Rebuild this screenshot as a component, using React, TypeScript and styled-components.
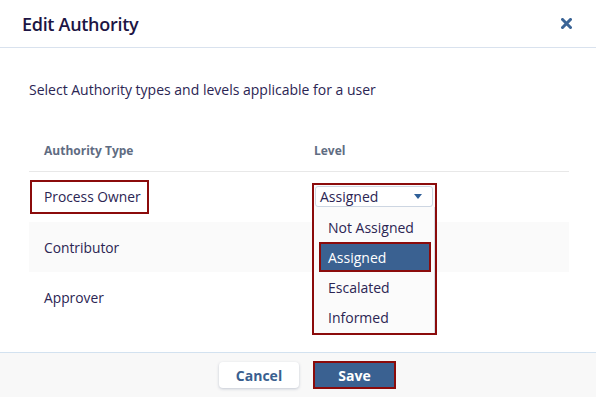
import React from 'react';
import styled, { createGlobalStyle } from 'styled-components';

const GlobalStyle = createGlobalStyle`
  html, body {
    margin: 0;
    padding: 0;
    background: #ffffff;
  }
  body {
    font-family: 'Open Sans', 'Noto Sans', sans-serif;
    color: #2b2553;
  }
`;

const Modal = styled.div`
  width: 596px;
  height: 397px;
  display: flex;
  flex-direction: column;
  background: #ffffff;
  overflow: hidden;
`;

const Header = styled.div`
  height: 48px;
  box-sizing: border-box;
  border-bottom: 1px solid #d9e2ee;
  display: flex;
  align-items: center;
  justify-content: space-between;
  padding: 0 24px 0 22px;
`;

const Title = styled.h2`
  margin: 0;
  font-size: 18px;
  font-weight: 600;
  color: #1d1544;
  letter-spacing: -0.3px;
`;

const CloseBtn = styled.button`
  border: none;
  background: transparent;
  padding: 0;
  width: 12px;
  height: 12px;
  display: flex;
  align-items: center;
  justify-content: center;
  cursor: pointer;
`;

const Body = styled.div`
  flex: 1;
  padding: 32px 27px 0 29px;
`;

const Intro = styled.p`
  margin: 0;
  font-size: 14px;
  color: #2b2553;
  line-height: 20px;
`;

const Table = styled.div`
  margin-top: 30px;
  display: grid;
  grid-template-columns: 1fr 1fr;
`;

const HeadCell = styled.div`
  height: 41px;
  display: flex;
  align-items: center;
  padding-left: 15px;
  font-size: 12px;
  font-weight: 700;
  color: #5f6c82;
  border-bottom: 1px solid #e8e8e8;
`;

const Cell = styled.div<{ $shaded?: boolean }>`
  position: relative;
  height: 50px;
  display: flex;
  align-items: center;
  padding-left: 15px;
  font-size: 13.8px;
  color: #2b2553;
  background: ${({ $shaded }) => ($shaded ? '#fafafa' : 'transparent')};
`;

const Highlighted = styled.span`
  margin-left: -14px;
  padding: 6px 6px 6px 12px;
  border: 2px solid #8b0b0b;
  line-height: 18px;
`;

const DropdownFrame = styled.div`
  position: absolute;
  top: 11px;
  left: 13px;
  width: 125px;
  box-sizing: border-box;
  border: 2px solid #8b0b0b;
  background: #fbfbfb;
  z-index: 2;
`;

const SelectBox = styled.div`
  margin: 1px 2px 0 1px;
  height: 21px;
  box-sizing: border-box;
  border: 1px solid #cdd6e2;
  border-radius: 3px;
  background: #ffffff;
  display: flex;
  align-items: center;
  justify-content: space-between;
  padding: 0 10px 0 4px;
  font-size: 14px;
  color: #2b2553;
`;

const Caret = styled.span`
  width: 0;
  height: 0;
  border-left: 4px solid transparent;
  border-right: 4px solid transparent;
  border-top: 5px solid #2f5f98;
`;

const OptionList = styled.ul`
  list-style: none;
  margin: 0;
  padding: 5px 3px 1px 5px;
  border-right: 1px solid #d5dbe4;
`;

const Option = styled.li<{ $active?: boolean }>`
  height: 30px;
  box-sizing: border-box;
  display: flex;
  align-items: center;
  padding-left: ${({ $active }) => ($active ? '7px' : '9px')};
  font-size: 14px;
  color: ${({ $active }) => ($active ? '#ffffff' : '#2b2553')};
  background: ${({ $active }) => ($active ? '#3a6191' : 'transparent')};
  border: ${({ $active }) => ($active ? '2px solid #8b0b0b' : 'none')};
`;

const Footer = styled.div`
  height: 45px;
  box-sizing: border-box;
  border-top: 1px solid #d3e2f0;
  background: #f8f8f8;
  display: flex;
  align-items: center;
  justify-content: center;
  gap: 14px;
  padding-left: 19px;
`;

const Button = styled.button<{ $primary?: boolean }>`
  font-family: 'Open Sans', 'Noto Sans', sans-serif;
  font-size: 14px;
  font-weight: 700;
  cursor: pointer;
  box-sizing: border-box;
  width: ${({ $primary }) => ($primary ? '83px' : '80px')};
  height: ${({ $primary }) => ($primary ? '28px' : '26px')};
  border-radius: ${({ $primary }) => ($primary ? '0' : '4px')};
  border: ${({ $primary }) => ($primary ? '2px solid #8b0b0b' : 'none')};
  background: ${({ $primary }) => ($primary ? '#3a6191' : '#ffffff')};
  color: ${({ $primary }) => ($primary ? '#ffffff' : '#3a5f8f')};
  box-shadow: ${({ $primary }) =>
    $primary ? 'none' : '0 1px 3px rgba(40, 60, 100, 0.25)'};
`;

const levels = ['Not Assigned', 'Assigned', 'Escalated', 'Informed'];

const App: React.FC = () => {
  const [level] = React.useState('Assigned');

  return (
    <Modal>
      <GlobalStyle />
      <Header>
        <Title>Edit Authority</Title>
        <CloseBtn aria-label="Close">
          <svg width="11" height="11" viewBox="0 0 11 11">
            <path
              d="M1.5 1.5 L9.5 9.5 M9.5 1.5 L1.5 9.5"
              stroke="#3a6496"
              strokeWidth="3"
              strokeLinecap="square"
            />
          </svg>
        </CloseBtn>
      </Header>
      <Body>
        <Intro>Select Authority types and levels applicable for a user</Intro>
        <Table>
          <HeadCell>Authority Type</HeadCell>
          <HeadCell>Level</HeadCell>

          <Cell>
            <Highlighted>Process Owner</Highlighted>
          </Cell>
          <Cell>
            <DropdownFrame>
              <SelectBox>
                {level}
                <Caret />
              </SelectBox>
              <OptionList>
                {levels.map((l) => (
                  <Option key={l} $active={l === level}>
                    {l}
                  </Option>
                ))}
              </OptionList>
            </DropdownFrame>
          </Cell>

          <Cell $shaded>Contributor</Cell>
          <Cell $shaded />

          <Cell>Approver</Cell>
          <Cell />
        </Table>
      </Body>
      <Footer>
        <Button>Cancel</Button>
        <Button $primary>Save</Button>
      </Footer>
    </Modal>
  );
};

export default App;
